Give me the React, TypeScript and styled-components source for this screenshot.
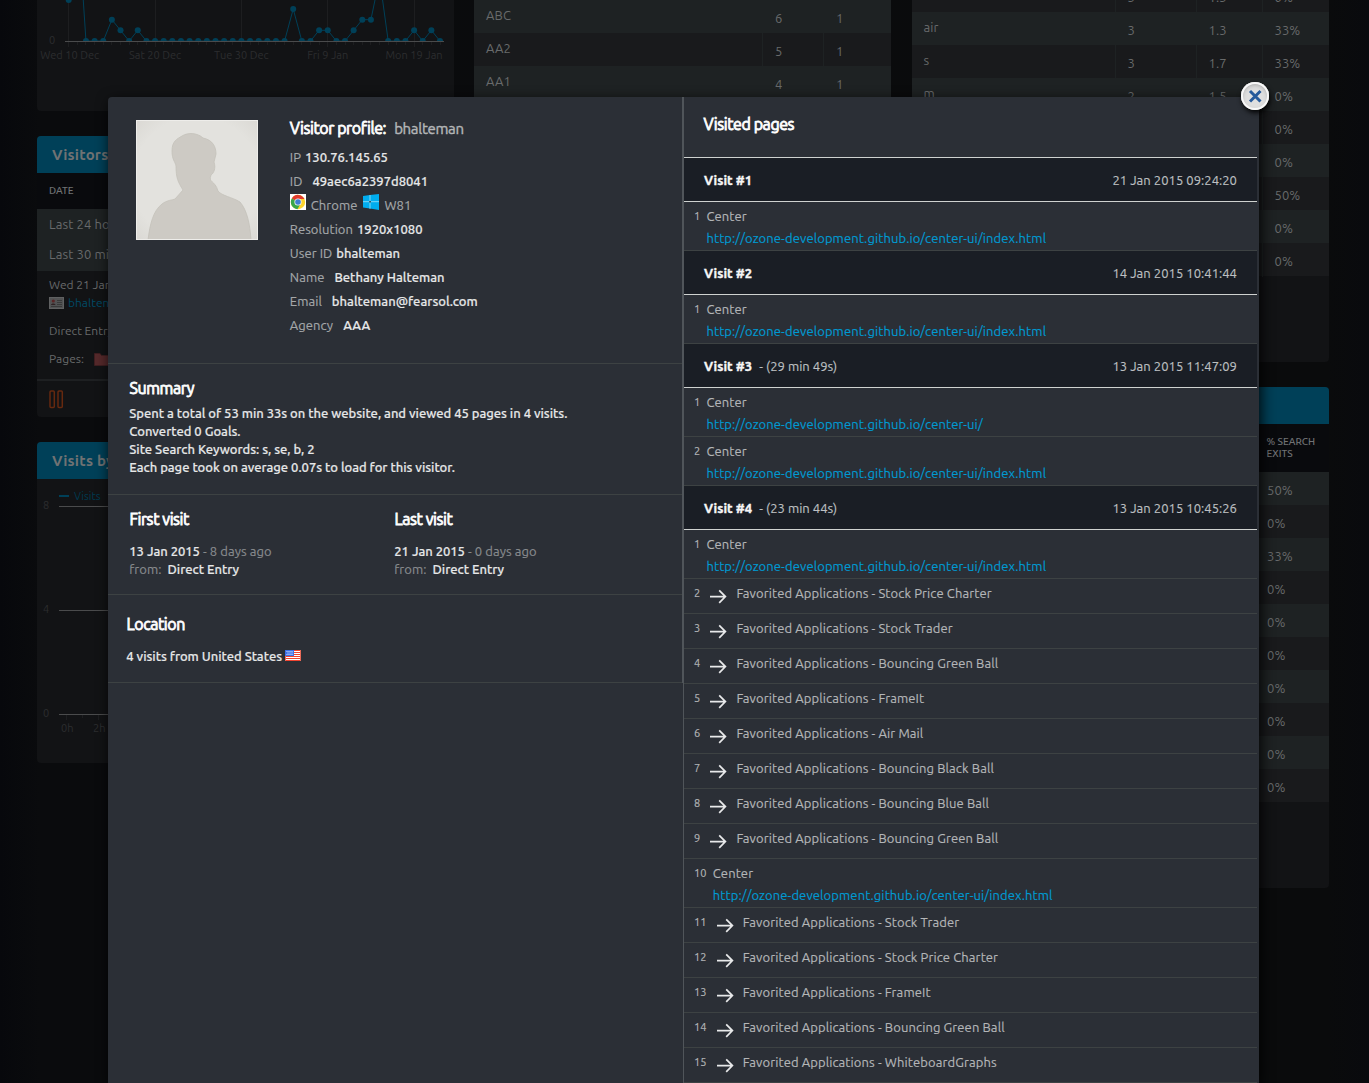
import React from 'react';
import styled, { createGlobalStyle } from 'styled-components';

const Global = createGlobalStyle`
  *, *::before, *::after { box-sizing: border-box; }
  body {
    margin: 0;
    background: #0a0b0d;
    font-family: Ubuntu, "Noto Sans", "Open Sans", sans-serif;
    font-size: 13px;
    overflow: hidden;
  }
`;

const Page = styled.div`
  position: relative;
  width: 1369px;
  height: 1083px;
  overflow: hidden;
  background: linear-gradient(90deg, #07080c 0, #0a0b0d 40px, #0a0b0c 1329px, #090a0e 1369px);
`;

/* ---------- dimmed dashboard ---------- */

const Dashboard = styled.div`
  display: grid;
  grid-template-columns: 437px 438px 417px;
  padding-left: 37px;
  align-items: start;
`;

const Column = styled.div`
  display: flex;
  flex-direction: column;
  gap: 25px;
  width: 417px;
`;

const Card = styled.section<{ $h: number }>`
  height: ${p => p.$h}px;
  background: #121315;
  border-radius: 0 0 4px 4px;
  overflow: hidden;
`;

const RoundCard = styled(Card)`
  border-radius: 4px;
`;

const CardHeader = styled.header`
  height: 37px;
  padding-left: 15px;
  background: #004058;
  color: #707273;
  font-size: 15px;
  font-weight: 700;
  letter-spacing: 0.2px;
  line-height: 37px;
  white-space: nowrap;
`;

const ColumnHead = styled.div<{ $h: number; $left: number }>`
  height: ${p => p.$h}px;
  padding: 12px 0 0 ${p => p.$left}px;
  background: #090a0d;
  color: #707274;
  font-size: 10px;
  font-weight: 500;
  line-height: 12px;
`;

const TableRow = styled.div<{ $light: boolean; $cols: string }>`
  display: grid;
  grid-template-columns: ${p => p.$cols};
  height: 33px;
  background: ${p => (p.$light ? '#1e2223' : '#191a1c')};
`;

const Cell = styled.div<{ $first?: boolean }>`
  padding-left: 12px;
  padding-top: ${p => (p.$first ? 0 : 3)}px;
  border-left: ${p => (p.$first ? 'none' : '1px solid #1e2223')};
  color: #686a6b;
  letter-spacing: 0.1px;
  line-height: 31px;
  white-space: nowrap;
`;

const LivePeriods = styled.div`
  height: 62px;
  padding-left: 12px;
  background: #1e2223;
  color: #686a6b;
  letter-spacing: 0.1px;
  line-height: 30px;
  white-space: nowrap;
`;

const LiveVisit = styled.div`
  display: flex;
  flex-direction: column;
  height: 108px;
  padding: 5px 0 0 12px;
  color: #686a6b;
  font-size: 12px;
  line-height: 18px;
  white-space: nowrap;
`;

const LiveLine = styled.div<{ $top?: number }>`
  display: flex;
  align-items: center;
  margin-top: ${p => p.$top ?? 0}px;
  a { color: #004a66; margin-left: 4px; }
  span { margin-right: 10px; }
`;

const LiveFooter = styled.div`
  height: 38px;
  padding: 9px 0 0 12px;
  border-top: 2px solid #1e2022;
`;

/* ---------- modal ---------- */

const Modal = styled.div`
  position: absolute;
  top: 97px;
  left: 108px;
  display: grid;
  grid-template-columns: 575px 574px;
  width: 1151px;
  height: 986px;
  border-radius: 4px 4px 0 0;
  background: #2b2f36;
  box-shadow: 2px 4px 14px rgba(0, 0, 0, 0.9);
  -webkit-text-stroke: 0.15px currentColor;
`;

const CloseButton = styled.button`
  position: absolute;
  top: -15px;
  right: -10px;
  width: 28px;
  height: 28px;
  padding: 0;
  border: 0;
  border-radius: 50%;
  background: #dfdfdf;
  box-shadow: inset 0 0 0 2px #f8f8f8, inset 0 2px 4px 1px #aaa, 1px 3px 5px rgba(0, 0, 0, 0.9);
  svg { display: block; }
`;

const LeftPane = styled.div`
  height: 586px;
  border-right: 1px solid #50555a;
`;

const Section = styled.section<{ $h: number; $pad: string }>`
  height: ${p => p.$h}px;
  padding: ${p => p.$pad};
  border-bottom: 1px solid #3d4243;
  color: #e6e7e8;
  font-weight: 500;
  letter-spacing: -0.03px;
  line-height: 18px;
  white-space: nowrap;
`;

const ProfileSection = styled(Section)`
  display: grid;
  grid-template-columns: 122px 1fr;
  column-gap: 31px;
`;

const Heading = styled.h2`
  margin: 0;
  padding-left: 0.5px;
  color: #fff;
  font-size: 16px;
  font-weight: 400;
  letter-spacing: -0.42px;
  line-height: 20px;
  -webkit-text-stroke: 0.8px currentColor;
`;

const Username = styled.span`
  margin-left: 8px;
  color: #b4b6b8;
  font-size: 15px;
  letter-spacing: -0.3px;
  -webkit-text-stroke-width: 0.4px;
`;

const Field = styled.div`
  display: flex;
  height: 24px;
  align-items: center;
  padding-left: 0.5px;
  color: #e6e7e8;
  letter-spacing: 0;
`;

const Label = styled.span<{ $gap: number }>`
  margin-right: ${p => p.$gap}px;
  color: #a4a7a9;
  font-weight: 400;
  letter-spacing: 0.06px;
`;

const Muted = styled.span`
  color: #888b8e;
  font-weight: 400;
  letter-spacing: 0.07px;
`;

const TwoColumns = styled(Section)`
  display: grid;
  grid-template-columns: 265px 1fr;
`;

const RightPane = styled.div`
  height: 986px;
  border-left: 1px solid #50555a;
  overflow: hidden;
`;

const PagesTitle = styled.div`
  height: 60px;
  padding: 17px 0 0 19px;
`;

const VisitHeader = styled.div<{ $first?: boolean }>`
  display: flex;
  justify-content: space-between;
  height: ${p => (p.$first ? 45 : 44)}px;
  padding: 0 20px;
  border-top: ${p => (p.$first ? '1px solid #cfd2d0' : 'none')};
  border-bottom: 1px solid #cfd2d0;
  background: #1a1e25;
  color: #bec0c2;
  letter-spacing: 0.04px;
  line-height: 44px;
`;

const VisitName = styled.strong`
  margin-right: 7px;
  color: #f6f6f6;
  font-weight: 700;
  -webkit-text-stroke: 0.35px currentColor;
`;

const PageRow = styled.div<{ $h: number }>`
  display: flex;
  height: ${p => p.$h}px;
  padding: 5px 0 0 10px;
  border-bottom: 1px solid #3d4243;
  color: #b4b6b8;
  letter-spacing: 0.105px;
  line-height: 18px;
  white-space: nowrap;
  svg { margin: 5px 9px 0 3px; }
`;

const Index = styled.span<{ $digits: number }>`
  width: ${p => p.$digits * 6.4}px;
  margin-right: 6px;
  font-size: 11px;
  letter-spacing: 0;
`;

const Link = styled.a`
  display: block;
  margin-top: 4px;
  color: #009ad2;
`;

const Arrow = () => (
  <svg width="18" height="15" viewBox="0 0 18 15" fill="none" stroke="#e8e9ea" strokeWidth="1.7">
    <path d="M1 7.6H16.5M10.2 1.4L16.4 7.6L10.2 13.8" />
  </svg>
);

const Avatar = () => (
  <svg width="122" height="120" viewBox="0 0 122 120">
    <defs>
      <radialGradient id="paper" cx="50%" cy="50%" r="75%">
        <stop offset="0.7" stopColor="#e3e2de" />
        <stop offset="1" stopColor="#d8d6d1" />
      </radialGradient>
    </defs>
    <rect width="122" height="120" fill="url(#paper)" />
    <path
      d="M12 120C14 104 17 91 26 84C31 80 37 80 39 79L47 70C42 62 40 58 40 46C39 41 36 40 36 31C36 21 41 19 46 16C52 12 62 13 67 18C77 20 80 27 80 34L78 42C80 48 78 53 75 55C72 63 79 60 82 71C86 76 96 77 104 82C111 90 114 104 115 120Z"
      fill="#cdcac4"
      stroke="#c4c1ba"
      strokeWidth="0.8"
    />
    <rect x="0.5" y="0.5" width="121" height="119" fill="none" stroke="#eeedea" />
  </svg>
);

const Chrome = () => (
  <svg width="16" height="16" viewBox="0 0 16 16">
    <rect width="16" height="16" fill="#fff" />
    <circle cx="8" cy="8" r="7.2" fill="#fdd42c" />
    <path d="M8 8L1.8 4.4A7.2 7.2 0 0 1 14.5 5H8Z" fill="#e13a2e" />
    <path d="M1.8 4.4A7.2 7.2 0 0 0 7.4 15.2L10.5 9.8L8 8Z" fill="#38a64a" />
    <circle cx="8" cy="8" r="3.6" fill="#f2f2f2" />
    <circle cx="8" cy="8" r="2.8" fill="#3f7fd0" />
  </svg>
);

const Windows = () => (
  <svg width="16" height="16" viewBox="0 0 16 16">
    <path d="M0 2L7 1V14.6L0 13.6ZM7 1L16 0V16L7 14.6Z" fill="#00adef" />
    <path d="M7 1V14.8M0 7.7H16" stroke="#8fdcf6" strokeWidth="0.9" />
    <rect x="6.3" y="7" width="1.5" height="1.5" fill="#14384a" />
  </svg>
);

const Flag = () => (
  <svg width="16" height="11" viewBox="0 0 16 11">
    <rect width="16" height="11" fill="#fff" />
    <path d="M0 .5H16M0 10.5H16M0 8.5H16M9 2.5H15M9 4.5H15M0 6.5H15" stroke="#f0432f" />
    <path d="M.5 0V11M15.5 0V11" stroke="#e86a58" />
    <rect width="9" height="6" fill="#3b6fe6" />
    <path d="M1.5 1.5H8M2.5 3H8M1.5 4.5H8" stroke="#dbe6ff" strokeDasharray="1 1" />
  </svg>
);

const VisitorCard = () => (
  <svg width="15" height="13" viewBox="0 0 15 13">
    <rect x="0.5" y="0.5" width="14" height="11" fill="#525354" stroke="#606162" />
    <circle cx="4.3" cy="4" r="1.6" fill="#5b2526" />
    <path d="M2 8C2 6 6.5 6 6.5 8Z" fill="#302224" />
    <path d="M8 3.5H13M8 5.5H13M8 7.5H13M2 9.5H13" stroke="#333" strokeWidth="0.8" />
    <path d="M3 12.5H5M10 12.5H12" stroke="#111" />
  </svg>
);

const Folder = () => (
  <svg width="18" height="14" viewBox="0 0 18 14">
    <path d="M.5 1.5H6L7.5 3.5H17V13.5H.5Z" fill="#55292b" stroke="#3f1e20" />
  </svg>
);

const Pause = () => (
  <svg width="15" height="19" viewBox="0 0 15 19" fill="none" stroke="#66290f" strokeWidth="1.5">
    <rect x="1" y="1" width="4.3" height="16.5" rx="1" />
    <rect x="9" y="1" width="4.3" height="16.5" rx="1" />
  </svg>
);

const BASE = 41;
const values: number[] = Array(44).fill(BASE);
Object.entries({ 0: 0, 1: -90, 5: 19.7, 6: 30.3, 8: 30.3, 26: 9, 29: 30.3, 30: 30.3, 33: 30.3, 34: 19.7, 35: 19.7, 36: -22, 40: 30.3, 42: 30.3 })
  .forEach(([i, y]) => { values[Number(i)] = y as number; });
const px = (i: number) => 31.7 + i * 8.635;

const EvolutionChart = () => (
  <svg width="417" height="111" fontSize="11" fill="#2c2d2f">
    <defs><clipPath id="plot"><rect width="417" height="41" /></clipPath></defs>
    {values.map((_, i) => (
      <path key={i} d={i % 10 === 0 ? `M${Math.floor(px(i))}.5 0V47` : `M${Math.floor(px(i))}.5 42V45`} stroke="#1d1e20" />
    ))}
    <g clipPath="url(#plot)">
      <polyline points={values.map((y, i) => `${px(i)},${y}`).join(' ')} fill="none" stroke="#004058" />
      {values.map((y, i) => <circle key={i} cx={px(i)} cy={y} r="3" fill="#004058" />)}
    </g>
    <path d="M28 41.5H407" stroke="#4a4b4c" />
    <text x="12" y="44">0</text>
    {['Wed 10 Dec', 'Sat 20 Dec', 'Tue 30 Dec', 'Fri 9 Jan', 'Mon 19 Jan'].map((t, i) => (
      <text key={t} x={px(i * 10) + (i ? 0 : 1)} y="59" textAnchor="middle">{t}</text>
    ))}
  </svg>
);

const HourChart = () => (
  <svg width="417" height="284" fontSize="11" fill="#2c2d2f">
    <path d="M22 17H32" stroke="#004058" strokeWidth="2" />
    <text x="37" y="21" fill="#003a50">Visits</text>
    <path d="M22 27.5H400M22 131.5H400M22 235.5H400" stroke="#4a4b4c" />
    <path d="M29.5 236V241M45.5 236V239M61.5 236V241" stroke="#1d1e20" />
    <text x="6" y="30">8</text>
    <text x="6" y="134">4</text>
    <text x="6" y="238">0</text>
    <text x="24" y="253">0h</text>
    <text x="56" y="253">2h</text>
  </svg>
);

const GROUPS = [['ABC', '6', '1'], ['AA2', '5', '1'], ['AA1', '4', '1']];
const KEYWORDS = [
  ['', '3', '1.3', '0%'],
  ['air', '3', '1.3', '33%'], ['s', '3', '1.7', '33%'], ['m', '2', '1.5', '0%'],
  ['', '', '', '0%'], ['', '', '', '0%'], ['', '', '', '50%'], ['', '', '', '0%'], ['', '', '', '0%'],
];
const EXITS = ['50%', '0%', '33%', '0%', '0%', '0%', '0%', '0%', '0%', '0%'];

const KeywordCard = styled(Card)`
  display: flex;
  flex-direction: column;
  justify-content: flex-end;
  padding-bottom: 86px;
  ${TableRow} { flex: none; }
  ${Cell} { padding-left: 11.5px; }
`;

const FIELDS: [string, string, number][] = [
  ['Resolution', '1920x1080', 4], ['User ID', 'bhalteman', 4], ['Name', 'Bethany Halteman', 10],
  ['Email', 'bhalteman@fearsol.com', 10], ['Agency', 'AAA', 10],
];

const SITE = 'http://ozone-development.github.io/center-ui/';
type Entry = { url?: string; app?: string };
const page = (url = SITE + 'index.html'): Entry => ({ url });
const app = (name: string): Entry => ({ app: name });
const VISITS: { date: string; length?: string; entries: Entry[] }[] = [
  { date: '21 Jan 2015 09:24:20', entries: [page()] },
  { date: '14 Jan 2015 10:41:44', entries: [page()] },
  { date: '13 Jan 2015 11:47:09', length: '29 min 49s', entries: [page(SITE), page()] },
  {
    date: '13 Jan 2015 10:45:26',
    length: '23 min 44s',
    entries: [
      page(), app('Stock Price Charter'), app('Stock Trader'), app('Bouncing Green Ball'), app('FrameIt'),
      app('Air Mail'), app('Bouncing Black Ball'), app('Bouncing Blue Ball'), app('Bouncing Green Ball'), page(),
      app('Stock Trader'), app('Stock Price Charter'), app('FrameIt'), app('Bouncing Green Ball'), app('WhiteboardGraphs'),
    ],
  },
];

const Iconed = styled(Field)`
  color: #a4a7a9;
  font-weight: 400;
  letter-spacing: 0.06px;
  svg { margin-top: -6px; margin-right: 5px; }
  span { margin-right: 6px; }
`;

const Spaced = styled.div<{ $top: number }>`
  margin-top: ${p => p.$top}px;
  padding-left: 0.3px;
`;

export default function App() {
  return (
    <Page>
      <Global />
      <Dashboard>
        <Column>
          <Card $h={111}><EvolutionChart /></Card>
          <RoundCard $h={281}>
            <CardHeader>Visitors</CardHeader>
            <ColumnHead $h={36} $left={12}>DATE</ColumnHead>
            <LivePeriods>
              <div>Last 24 hours</div>
              <div>Last 30 min</div>
            </LivePeriods>
            <LiveVisit>
              <LiveLine>Wed 21 Jan</LiveLine>
              <LiveLine><VisitorCard /><a>bhalteman</a></LiveLine>
              <LiveLine $top={10}>Direct Entry</LiveLine>
              <LiveLine $top={10}><span>Pages:</span><Folder /></LiveLine>
            </LiveVisit>
            <LiveFooter><Pause /></LiveFooter>
          </RoundCard>
          <RoundCard $h={321}>
            <CardHeader>Visits by</CardHeader>
            <HourChart />
          </RoundCard>
        </Column>
        <Column>
          <Card $h={160}>
            {GROUPS.map((r, i) => (
              <TableRow key={r[0]} $light={i % 2 === 0} $cols="288px 61px 1fr">
                {r.map((c, j) => <Cell key={j} $first={j === 0}>{c}</Cell>)}
              </TableRow>
            ))}
          </Card>
        </Column>
        <Column>
          <KeywordCard $h={362}>
            {KEYWORDS.map((r, i) => (
              <TableRow key={i} $light={i % 2 === 1} $cols="203px 81px 66px 1fr">
                {r.map((c, j) => <Cell key={j} $first={j === 0}>{c}</Cell>)}
              </TableRow>
            ))}
          </KeywordCard>
          <RoundCard $h={501}>
            <CardHeader />
            <ColumnHead $h={48} $left={354.5}>% SEARCH<br />EXITS</ColumnHead>
            {EXITS.map((v, i) => (
              <TableRow key={i} $light={i % 2 === 0} $cols="342px 1fr">
                <Cell $first />
                <Cell>{v}</Cell>
              </TableRow>
            ))}
          </RoundCard>
        </Column>
      </Dashboard>

      <Modal>
        <LeftPane>
          <ProfileSection $h={267} $pad="23px 0 0 28px">
            <Avatar />
            <div>
              <Spaced $top={-2}>
                <Heading>Visitor profile:<Username>bhalteman</Username></Heading>
              </Spaced>
              <Spaced $top={6}>
                <Field><Label $gap={4}>IP</Label>130.76.145.65</Field>
                <Field><Label $gap={10}>ID</Label>49aec6a2397d8041</Field>
                <Iconed><Chrome /><span>Chrome</span><Windows />W81</Iconed>
                {FIELDS.map(([k, v, g]) => <Field key={k}><Label $gap={g}>{k}</Label>{v}</Field>)}
              </Spaced>
            </div>
          </ProfileSection>
          <Section $h={131} $pad="14px 0 0 21px">
            <Heading>Summary</Heading>
            <Spaced $top={6}>
              <div>Spent a total of 53 min 33s on the website, and viewed 45 pages in 4 visits.</div>
              <div>Converted 0 Goals.</div>
              <div>Site Search Keywords: s, se, b, 2</div>
              <div>Each page took on average 0.07s to load for this visitor.</div>
            </Spaced>
          </Section>
          <TwoColumns $h={100} $pad="14px 0 0 21px">
            {[['First visit', '13 Jan 2015', '8'], ['Last visit', '21 Jan 2015', '0']].map(([title, date, days]) => (
              <div key={title}>
                <Heading>{title}</Heading>
                <Spaced $top={13}>
                  <div>{date} <Muted>- {days} days ago</Muted></div>
                  <div><Muted>from: </Muted>&nbsp;Direct Entry</div>
                </Spaced>
              </div>
            ))}
          </TwoColumns>
          <Section $h={88} $pad="19px 0 0 18px">
            <Heading>Location</Heading>
            <Spaced $top={13}>4 visits from United States <Flag /></Spaced>
          </Section>
        </LeftPane>
        <RightPane>
          <PagesTitle><Heading>Visited pages</Heading></PagesTitle>
          {VISITS.map((v, n) => (
            <React.Fragment key={n}>
              <VisitHeader $first={n === 0}>
                <span><VisitName>Visit #{n + 1}</VisitName>{v.length && `- (${v.length})`}</span>
                <span>{v.date}</span>
              </VisitHeader>
              {v.entries.map((e, i) => (
                <PageRow key={i} $h={e.url ? 49 : 35}>
                  <Index $digits={String(i + 1).length}>{i + 1}</Index>
                  {e.url
                    ? <div>Center<Link>{e.url}</Link></div>
                    : <><Arrow />Favorited Applications - {e.app}</>}
                </PageRow>
              ))}
            </React.Fragment>
          ))}
        </RightPane>
        <CloseButton aria-label="Close">
          <svg width="28" height="28" viewBox="0 0 28 28">
            <path d="M9 9L19.5 19.5M19.5 9L9 19.5" stroke="#265a9b" strokeWidth="3" />
          </svg>
        </CloseButton>
      </Modal>
    </Page>
  );
}
